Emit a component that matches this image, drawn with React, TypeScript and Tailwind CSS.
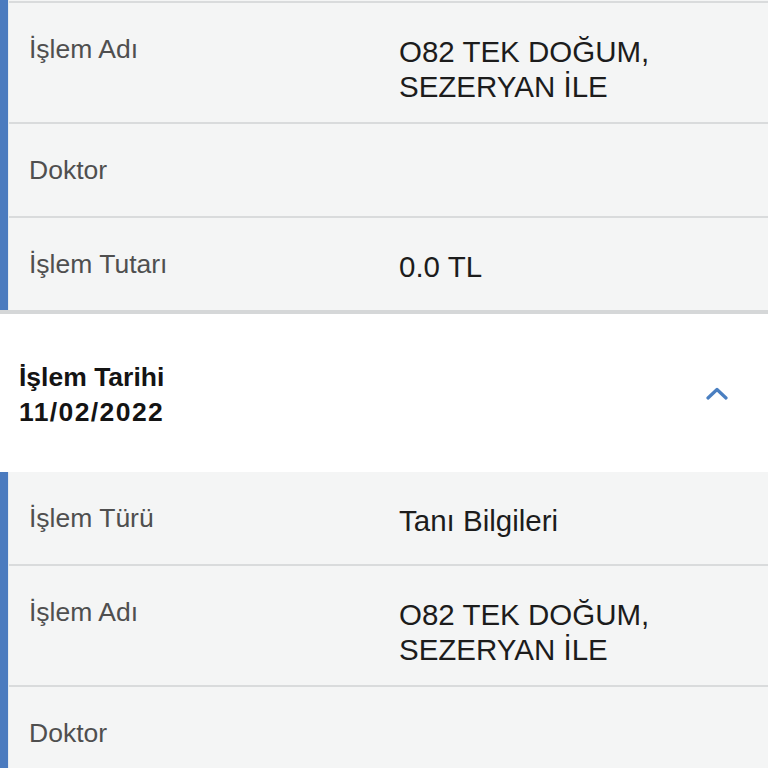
import React from "react";

type Row = { label: string; value?: string[] };

const firstCard: Row[] = [
  { label: "İşlem Adı", value: ["O82 TEK DOĞUM,", "SEZERYAN İLE"] },
  { label: "Doktor" },
  { label: "İşlem Tutarı", value: ["0.0 TL"] },
];

const secondCard: Row[] = [
  { label: "İşlem Türü", value: ["Tanı Bilgileri"] },
  { label: "İşlem Adı", value: ["O82 TEK DOĞUM,", "SEZERYAN İLE"] },
  { label: "Doktor" },
];

function DetailRow({ row, last }: { row: Row; last?: boolean }) {
  return (
    <div
      className={`flex items-start pt-[31px] pb-[18px] pl-[20px] ${
        last ? "min-h-[92px]" : "min-h-[94px] border-b-2 border-[#d9dbdc]"
      }`}
    >
      <div className="w-[370px] shrink-0 text-[26.5px] leading-[30px] text-[#4f4f4f]">
        {row.label}
      </div>
      <div className="flex-1 text-[29.5px] leading-[35px] text-[#1c1c1c]">
        {row.value?.map((line) => (
          <div key={line}>{line}</div>
        ))}
      </div>
    </div>
  );
}

function Card({ rows, topLine, bottomShadow }: { rows: Row[]; topLine?: boolean; bottomShadow?: boolean }) {
  return (
    <div className={bottomShadow ? "border-b-[4px] border-[#d5d7d8]" : ""}>
      <div className="flex bg-[#f4f5f5]">
        <div className="w-[8px] shrink-0 bg-[#4b7bbf]" />
        <div className="w-[1px] shrink-0 bg-[#e6ebf1]" />
        <div className="flex-1">
          {topLine && <div className="h-[1px] bg-[#f4f5f5]" />}
          {topLine && <div className="h-[2px] bg-[#d9dbdc]" />}
          {rows.map((row, i) => (
            <DetailRow key={i} row={row} last={i === rows.length - 1} />
          ))}
        </div>
      </div>
    </div>
  );
}

export default function App() {
  return (
    <div
      className="w-[768px] h-[768px] overflow-hidden bg-white"
      style={{ fontFamily: '"Liberation Sans", Arial, sans-serif' }}
    >
      <Card rows={firstCard} topLine bottomShadow />

      {/* Section header */}
      <div className="flex items-center justify-between h-[158px] pl-[19px] pr-[40px] bg-white">
        <div className="text-[26.5px] leading-[35px] font-bold text-[#141414] pt-[4px]">
          <div>İşlem Tarihi</div>
          <div className="tracking-[1.4px]">11/02/2022</div>
        </div>
        <svg width="24" height="14" viewBox="0 0 24 14" className="mr-[-1px]">
          <polyline
            points="3,12 12,3.5 21,12"
            fill="none"
            stroke="#4a7fc1"
            strokeWidth="3.2"
            strokeLinecap="round"
            strokeLinejoin="round"
          />
        </svg>
      </div>

      <Card rows={secondCard} />
    </div>
  );
}
